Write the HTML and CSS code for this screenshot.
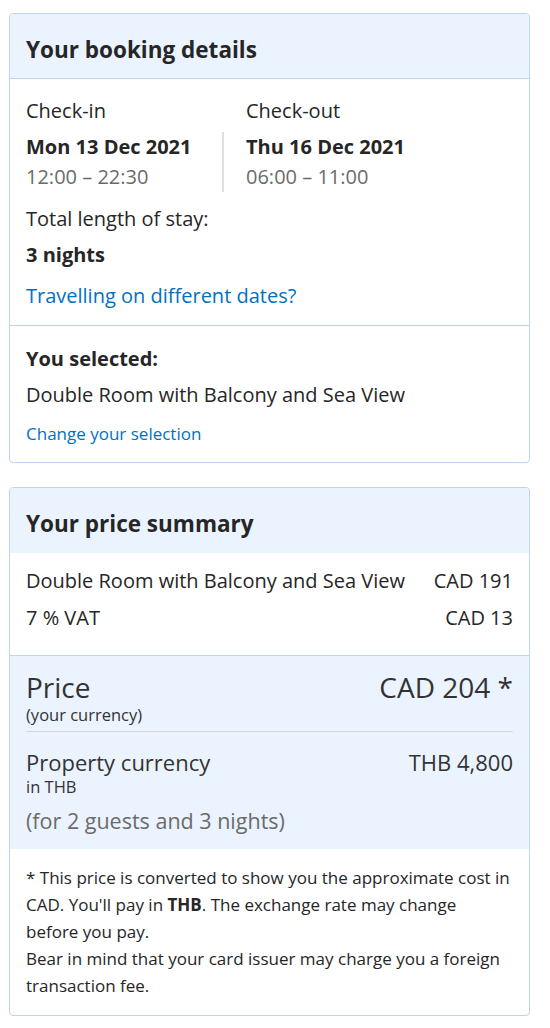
FILE: index.html
```html
<!DOCTYPE html>
<html lang="en">
<head>
<meta charset="utf-8">
<title>Booking summary</title>
<link rel="stylesheet" href="styles.css">
</head>
<body>
<div class="page">
  <section class="card">
    <header class="card-head head-border"><h2>Your booking details</h2></header>
    <div class="card-body first">
      <div class="dates">
        <div class="col">
          <div class="label">Check-in</div>
          <div class="date-block">
            <div class="date">Mon 13 Dec 2021</div>
            <div class="time">12:00 – 22:30</div>
          </div>
        </div>
        <div class="col col-out">
          <div class="label">Check-out</div>
          <div class="date-block">
            <div class="date">Thu 16 Dec 2021</div>
            <div class="time">06:00 – 11:00</div>
          </div>
        </div>
      </div>
      <div class="label stay">Total length of stay:</div>
      <div class="strong">3 nights</div>
      <a class="link" href="#">Travelling on different dates?</a>
    </div>
    <div class="card-body selected">
      <div class="strong sel-title">You selected:</div>
      <div class="room">Double Room with Balcony and Sea View</div>
      <a class="link small" href="#">Change your selection</a>
    </div>
  </section>

  <section class="card">
    <header class="card-head"><h2>Your price summary</h2></header>
    <div class="card-body lines">
      <div class="line"><span>Double Room with Balcony and Sea View</span><span>CAD 191</span></div>
      <div class="line"><span>7 % VAT</span><span>CAD 13</span></div>
    </div>
    <div class="total">
      <div class="total-row main">
        <div>
          <div class="big">Price</div>
          <div class="sub">(your currency)</div>
        </div>
        <div class="big">CAD 204 *</div>
      </div>
      <div class="total-row prop">
        <div>
          <div class="mid">Property currency</div>
          <div class="sub">in THB</div>
        </div>
        <div class="mid">THB 4,800</div>
      </div>
      <div class="guests">(for 2 guests and 3 nights)</div>
    </div>
    <div class="card-body note">
      <p>* This price is converted to show you the approximate cost in CAD. You'll pay in <b>THB</b>. The exchange rate may change before you pay.<br>Bear in mind that your card issuer may charge you a foreign transaction fee.</p>
    </div>
  </section>
</div>
</body>
</html>
```

FILE: styles.css
```css
html, body {
  margin: 0;
  padding: 0;
  background: #ffffff;
}
body {
  font-family: "Open Sans", "Noto Sans", sans-serif;
  color: #262626;
  font-size: 20px;
  line-height: 30px;
}
.page {
  width: 521px;
  margin: 13px 0 0 9px;
  display: flex;
  flex-direction: column;
  gap: 24px;
}
.card {
  border: 1px solid #bcd5f3;
  border-radius: 4px;
  overflow: hidden;
  background: #fff;
}
.card-head {
  background: #ebf3ff;
  padding: 21px 16px 14px;
}
.head-border {
  border-bottom: 1px solid #bcd5f3;
  padding-bottom: 13px;
}
.card-head h2 {
  margin: 0;
  font-size: 22.5px;
  line-height: 30px;
  font-weight: 700;
  color: #262626;
}
.card-body {
  padding: 0 16px;
}
.first {
  padding-top: 17px;
  padding-bottom: 14px;
}
.dates {
  display: grid;
  grid-template-columns: 196px 1fr;
}
.col-out .label {
  padding-left: 24px;
}
.col-out .date-block {
  border-left: 2px solid #e0e0e0;
  padding-left: 22px;
}
.label {
  margin-bottom: 6px;
}
.date, .strong {
  font-weight: 700;
}
.time {
  color: #6b6b6b;
}
.stay {
  margin-top: 12px;
}
.link {
  display: block;
  color: #0071c2;
  text-decoration: none;
  margin-top: 11px;
}
.link.small {
  font-size: 17px;
  line-height: 26px;
}
.selected {
  border-top: 1px solid #bcd5f3;
  padding-top: 18px;
  padding-bottom: 15px;
}
.sel-title {
  margin-bottom: 6px;
}
.lines {
  padding-top: 13px;
  padding-bottom: 22px;
  display: flex;
  flex-direction: column;
  gap: 7px;
}
.line {
  display: flex;
  justify-content: space-between;
}
.total {
  background: #ebf3ff;
  border-top: 1px solid #bcd5f3;
  padding: 13px 16px 13px;
  color: #333;
}
.total-row {
  display: flex;
  justify-content: space-between;
  align-items: flex-start;
}
.main {
  border-bottom: 1px solid #d9d9d9;
  padding-bottom: 6px;
  margin-bottom: 15px;
}
.big {
  font-size: 28px;
  line-height: 36px;
}
.mid {
  font-size: 22px;
  line-height: 30px;
}
.sub {
  font-size: 16.5px;
  line-height: 20px;
}
.guests {
  color: #6b6b6b;
  font-size: 21.5px;
  margin-top: 9px;
}
.note {
  padding-top: 15px;
  padding-bottom: 16px;
}
.note p {
  margin: 0;
  font-size: 17px;
  line-height: 27px;
}
```
